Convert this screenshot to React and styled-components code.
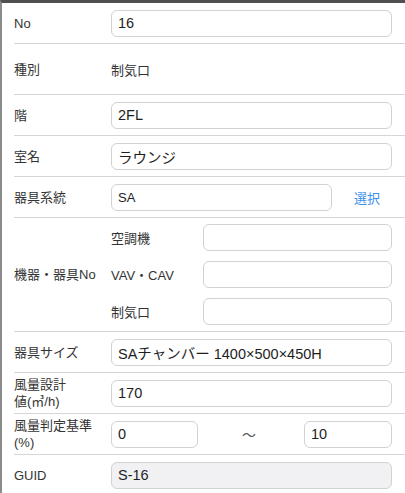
import React from "react";
import styled, { createGlobalStyle } from "styled-components";

const Global = createGlobalStyle`
  html, body { margin: 0; padding: 0; background: #fff; }
  body { font-family: "Liberation Sans", "Noto Sans CJK JP", sans-serif; color: #333; }
  * { box-sizing: border-box; }
`;

const Frame = styled.div`
  width: 405px;
  height: 493px;
  overflow: hidden;
  border-top: 3px solid #505050;
  border-left: 2px solid #8a8a8a;
  background: #fff;
`;

const Row = styled.div`
  display: flex;
  align-items: center;
  margin-left: 12px;
  padding-right: 13px;
  min-height: ${(p) => p.$h || 41}px;
  border-bottom: 1px solid #d6d6d6;
`;

const Label = styled.div`
  width: 97px;
  flex: none;
  font-size: 13px;
  line-height: 17px;
  color: #333;
`;

const Value = styled.div`
  font-size: 13px;
  color: #333;
`;

const Field = styled.div`
  height: 27px;
  flex: ${(p) => (p.$w ? "none" : "1")};
  width: ${(p) => (p.$w ? `${p.$w}px` : "auto")};
  border: 1px solid #d2d2d2;
  border-radius: 6px;
  background: ${(p) => (p.$disabled ? "#f1f1f4" : "#fff")};
  padding: 0 6px;
  display: flex;
  align-items: center;
  font-size: ${(p) => (p.$small ? 13 : 14.5)}px;
  color: #1e1e1e;
  white-space: nowrap;
  overflow: hidden;
`;

const LinkBtn = styled.div`
  flex: 1;
  text-align: center;
  font-size: 13px;
  color: #3b8ff0;
  padding-left: 10px;
`;

const SubGrid = styled.div`
  flex: 1;
  display: grid;
  grid-template-columns: 92px 1fr;
  row-gap: 10px;
  padding: 6px 0 6px;
  align-items: center;
`;

const SubLabel = styled.div`
  font-size: 13px;
  color: #333;
`;

const Range = styled.div`
  flex: 1;
  display: grid;
  grid-template-columns: 87px 1fr 88px;
  align-items: center;
`;

const Tilde = styled.div`
  text-align: center;
  font-size: 14px;
  color: #555;
  padding-right: 4px;
`;

export default function App() {
  return (
    <>
      <Global />
      <Frame>
        <Row>
          <Label>No</Label>
          <Field>16</Field>
        </Row>
        <Row $h={51}>
          <Label>種別</Label>
          <Value>制気口</Value>
        </Row>
        <Row>
          <Label>階</Label>
          <Field>2FL</Field>
        </Row>
        <Row>
          <Label>室名</Label>
          <Field>ラウンジ</Field>
        </Row>
        <Row>
          <Label>器具系統</Label>
          <Field $w={221} $small>SA</Field>
          <LinkBtn>選択</LinkBtn>
        </Row>
        <Row>
          <Label>機器・器具No</Label>
          <SubGrid>
            <SubLabel>空調機</SubLabel>
            <Field />
            <SubLabel>VAV・CAV</SubLabel>
            <Field />
            <SubLabel>制気口</SubLabel>
            <Field />
          </SubGrid>
        </Row>
        <Row>
          <Label>器具サイズ</Label>
          <Field>SAチャンバー 1400×500×450H</Field>
        </Row>
        <Row>
          <Label>
            風量設計
            <br />
            値(㎥/h)
          </Label>
          <Field>170</Field>
        </Row>
        <Row>
          <Label>
            風量判定基準
            <br />
            (%)
          </Label>
          <Range>
            <Field>0</Field>
            <Tilde>〜</Tilde>
            <Field>10</Field>
          </Range>
        </Row>
        <Row>
          <Label>GUID</Label>
          <Field $disabled>S-16</Field>
        </Row>
      </Frame>
    </>
  );
}
